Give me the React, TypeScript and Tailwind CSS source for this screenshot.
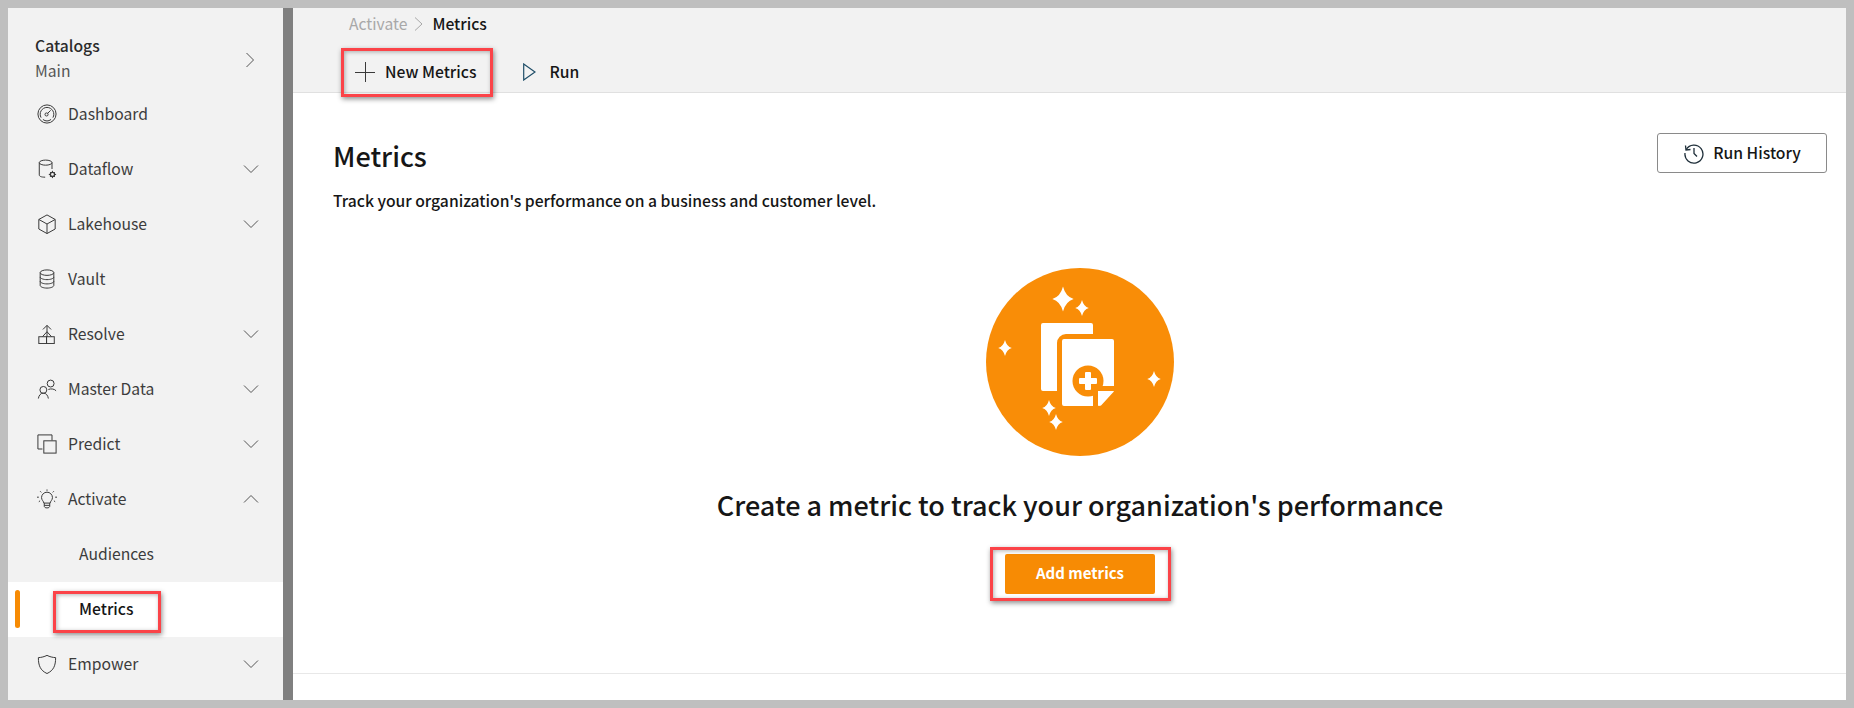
import React from "react";

const font = { fontFamily: '"Noto Sans CJK JP", "Noto Sans", sans-serif' };

const S = ({ children }: { children: React.ReactNode }) => (
  <svg width="20" height="20" viewBox="0 0 22 22" fill="none" stroke="#3a3a3a" strokeWidth="1.1" className="ml-[1px] shrink-0">
    {children}
  </svg>
);

const Chevron = ({ dir, className = "" }: { dir: "down" | "up" | "right"; className?: string }) => (
  <svg width="16" height="16" viewBox="0 0 16 16" fill="none" stroke="#555" strokeWidth="1" className={`shrink-0 ${className}`}>
    {dir === "down" && <path d="M1 4.500 8 11.500 15 4.500" />}
    {dir === "up" && <path d="M1 11.500 8 4.500 15 11.500" />}
    {dir === "right" && <path d="M4.500 1 11.500 8 4.500 15" />}
  </svg>
);

const icons: Record<string, React.ReactNode> = {
  Dashboard: (
    <S>
      <circle cx="11" cy="11" r="10" />
      <path d="M4.500 15A7.500 7.500 0 1 1 17.500 15" />
      <path d="M6.500 17a7.500 7.500 0 0 0 9 0" />
      <circle cx="10.500" cy="11.500" r="1.700" />
      <path d="M11.700 10.300 15 7" />
    </S>
  ),
  Dataflow: (
    <S>
      <ellipse cx="9.500" cy="4" rx="7" ry="2.800" />
      <path d="M2.500 4v13.500c0 1.500 2 2.500 6.500 2.500M16.500 4v7" />
      <circle cx="17" cy="17" r="2.300" strokeWidth="1.500" />
      <path d="M17 13v1.500M17 19.500V21M13 17h1.500M19.500 17H21M14.300 14.300l1 1M18.700 18.700l1 1M14.300 19.700l1-1M18.700 15.300l1-1" />
    </S>
  ),
  Lakehouse: (
    <S>
      <path d="M11 1 20 6v10.500L11 21.500 2 16.500V6Z" />
      <path d="M2 6 11 11l9-5M11 11v10.500" />
    </S>
  ),
  Vault: (
    <S>
      <ellipse cx="11" cy="4" rx="7.500" ry="3" />
      <path d="M3.500 4v14c0 1.700 3.500 3 7.500 3s7.500-1.300 7.500-3V4" />
      <path d="M3.500 8.700c0 1.700 3.500 3 7.500 3s7.500-1.300 7.500-3M3.500 13.400c0 1.700 3.500 3 7.500 3s7.500-1.300 7.500-3" />
    </S>
  ),
  Resolve: (
    <S>
      <path d="M11 1.500V14M6.500 6 11 1.500 15.500 6M11 8.500l-5 5.500M11 8.500l5 5.500" />
      <rect x="2" y="14" width="8.500" height="7.500" />
      <rect x="10.500" y="14" width="8.500" height="7.500" />
    </S>
  ),
  "Master Data": (
    <S>
      <circle cx="15" cy="5" r="3.800" />
      <path d="M12.500 11.500c3-1.200 7-.5 8.500 1.500" />
      <circle cx="7" cy="12" r="3.800" />
      <path d="M1.500 21.500c.5-3.500 2.500-6 5.500-6s5 2.500 5.500 6" />
    </S>
  ),
  Predict: (
    <S>
      <path d="M1 16.500V1h15.500v6" />
      <path d="M1 16.500h5" />
      <rect x="7.500" y="7.500" width="13.500" height="13.500" />
    </S>
  ),
  Activate: (
    <S>
      <path d="M7.500 15.500c0-2-2.500-3.200-2.500-6a6 6 0 0 1 12 0c0 2.800-2.500 4-2.500 6Z" />
      <path d="M8 15.500V19c0 1 1 1.800 3 1.800s3-.8 3-1.800v-3.500M8 18h6" />
      <path d="M11 .5V2M3.500 2.500l1.200 1.200M18.500 2.500l-1.200 1.200M0 9h2M20 9h2M2 14l1.400-1M20 14l-1.400-1" />
    </S>
  ),
  Empower: (
    <S>
      <path d="M11 1.500c3 1.500 6 2.300 9.500 2.500 0 8.500-2 14-9.500 17.500C3.500 18 1.500 12.500 1.500 4 5 3.800 8 3 11 1.500Z" />
    </S>
  ),
};

const Row = ({ label, chevron }: { label: string; chevron?: "down" | "up" }) => (
  <div className="flex h-[55px] items-center pb-[1px] pl-[36px] pr-[24px] text-[15.7px] text-[#3c3c3c]">
    <div className="flex w-[32px] items-center">{icons[label]}</div>
    <span className="flex-1">{label}</span>
    {chevron && <Chevron dir={chevron} />}
  </div>
);

const Highlight = ({ className }: { className: string }) => (
  <div className={`pointer-events-none absolute border-[3px] border-[#fb4348] shadow-[1px_2px_5px_rgba(0,0,0,0.45),inset_1px_1px_4px_rgba(0,0,0,0.3)] ${className}`} />
);

const Star = ({ x, y, r }: { x: number; y: number; r: number }) => (
  <path
    fill="#fff"
    d={`M${x} ${y - r}Q${x + r * 0.2} ${y - r * 0.2} ${x + r * 0.85} ${y}Q${x + r * 0.2} ${y + r * 0.2} ${x} ${y + r}Q${x - r * 0.2} ${y + r * 0.2} ${x - r * 0.85} ${y}Q${x - r * 0.2} ${y - r * 0.2} ${x} ${y - r}Z`}
  />
);

export default function App() {
  return (
    <div className="relative h-[708px] w-[1854px] overflow-hidden bg-[#bfbfbf] p-[8px]" style={font}>
      <div className="flex h-[692px]">
        <aside className="w-[275px] shrink-0 bg-[#f2f2f2]">
          <div className="flex h-[79px] items-center pl-[27px] pr-[25px] pt-[20px]">
            <div className="flex-1">
              <div className="text-[15.7px] font-medium leading-[25px] text-[#2b2b2b]">Catalogs</div>
              <div className="text-[15.7px] leading-[25px] text-[#555]">Main</div>
            </div>
            <Chevron dir="right" className="mt-[5px]" />
          </div>
          <div className="-ml-[8px] w-[283px]">
            <Row label="Dashboard" />
            <Row label="Dataflow" chevron="down" />
            <Row label="Lakehouse" chevron="down" />
            <Row label="Vault" />
            <Row label="Resolve" chevron="down" />
            <Row label="Master Data" chevron="down" />
            <Row label="Predict" chevron="down" />
            <Row label="Activate" chevron="up" />
            <div className="flex h-[55px] items-center pb-[1px] pl-[79px] text-[15.7px] text-[#3c3c3c]">Audiences</div>
            <div className="relative ml-[8px] flex h-[55px] items-center bg-white pb-[1px] pl-[71px] text-[15.7px] font-medium text-[#161616]">
              <span className="absolute left-[7px] top-[8px] h-[38px] w-[5px] rounded-full bg-[#f78b04]" />
              Metrics
            </div>
            <Row label="Empower" chevron="down" />
          </div>
        </aside>
        <div className="w-[10px] shrink-0 bg-[#808080]" />
        <main className="flex flex-1 flex-col bg-white">
          <header className="h-[85px] shrink-0 border-b border-[#e0e0e0] bg-[#f2f2f2] pl-[56px]">
            <div className="flex h-[31px] items-center text-[15.7px]">
              <span className="text-[#a8a8a8]">Activate</span>
              <svg width="12" height="16" viewBox="0 0 12 16" fill="none" stroke="#a8a8a8" className="ml-[6px] mr-[7px]">
                <path d="M2 1.500 9 8 2 14.500" />
              </svg>
              <span className="font-medium text-[#161616]">Metrics</span>
            </div>
            <div className="mt-[12px] flex h-[42px] items-center pl-[6px] text-[15.7px] font-medium text-[#161616]">
              <svg width="20" height="20" viewBox="0 0 20 20" fill="none" stroke="#3a3a3a" className="mr-[10px]">
                <path d="M0 10.500h20M10.500 0v20" />
              </svg>
              New Metrics
              <svg width="13" height="18" viewBox="0 0 13 18" fill="none" stroke="#1f4e68" strokeWidth="1.200" className="ml-[47px] mr-[13px]">
                <path d="M.7 1 12 9 .7 17Z" />
              </svg>
              Run
            </div>
          </header>
          <section className="flex flex-1 flex-col border-b border-[#e8e8e8] pl-[40px] pr-[19px]">
            <div className="flex items-start justify-between pt-[40px]">
              <div className="pt-[3px]">
                <h1 className="text-[27px] font-medium leading-[40px] text-[#161616]">Metrics</h1>
                <p className="mt-[14px] text-[15.7px] font-medium leading-[22px] text-[#161616]">
                  Track your organization's performance on a business and customer level.
                </p>
              </div>
              <button className="flex h-[40px] w-[170px] items-center justify-center gap-[8px] rounded-[3px] border border-[#8a8a8a] bg-white text-[15.7px] font-medium text-[#161616]">
                <svg width="22" height="22" viewBox="0 0 22 22" fill="none" stroke="#1f2f3a" strokeWidth="1.300">
                  <path d="M3.200 7.500A9 9 0 1 1 2 11" />
                  <path d="M2.500 3.500 3 8l4.500-.5" />
                  <path d="M11 6v5.500l3 3" />
                </svg>
                Run History
              </button>
            </div>
            <div className="flex flex-col items-center">
              <svg width="190" height="190" viewBox="0 0 190 190" className="mt-[55px]">
                <g transform="translate(1 1)">
                  <circle cx="94" cy="94" r="94" fill="#f98d07" />
                  <Star x={77} y={31} r={12.500} />
                  <Star x={96} y={40} r={8} />
                  <Star x={19} y={80} r={8} />
                  <Star x={168} y={111} r={8} />
                  <Star x={63} y={140} r={8} />
                  <Star x={70} y={154} r={8} />
                  <path fill="#fff" d="M55 57a2 2 0 0 1 2-2h48a2 2 0 0 1 2 2v9H80a9 9 0 0 0-9 9v48H57a2 2 0 0 1-2-2Z" />
                  <path fill="#fff" d="M76 73a2 2 0 0 1 2-2h48a2 2 0 0 1 2 2v45h-21v20H78a2 2 0 0 1-2-2Z" />
                  <circle cx="102" cy="113" r="15.500" fill="#f98d07" />
                  <rect x="99" y="104" width="6" height="18" fill="#fff" rx="1" />
                  <rect x="93" y="110" width="18" height="6" fill="#fff" rx="1" />
                  <path fill="#fff" d="M112 123h16c-.5 1-1 1.500-1.500 2l-11 12c-1 1-3.500 1.500-3.500 0Z" />
                </g>
              </svg>
              <h2 className="mt-[28px] text-[27px] font-medium leading-[40px] text-[#161616]">
                Create a metric to track your organization's performance
              </h2>
              <button className="mt-[29px] flex h-[40px] w-[150px] items-center justify-center rounded-[2px] bg-[#f78b04] pb-[2px] text-[15px] font-bold text-white">
                Add metrics
              </button>
            </div>
          </section>
          <div className="h-[26px] shrink-0" />
        </main>
      </div>
      <Highlight className="left-[53px] top-[591px] h-[42px] w-[108px]" />
      <Highlight className="left-[341px] top-[48px] h-[49px] w-[152px]" />
      <Highlight className="left-[990px] top-[547px] h-[54px] w-[181px]" />
    </div>
  );
}
